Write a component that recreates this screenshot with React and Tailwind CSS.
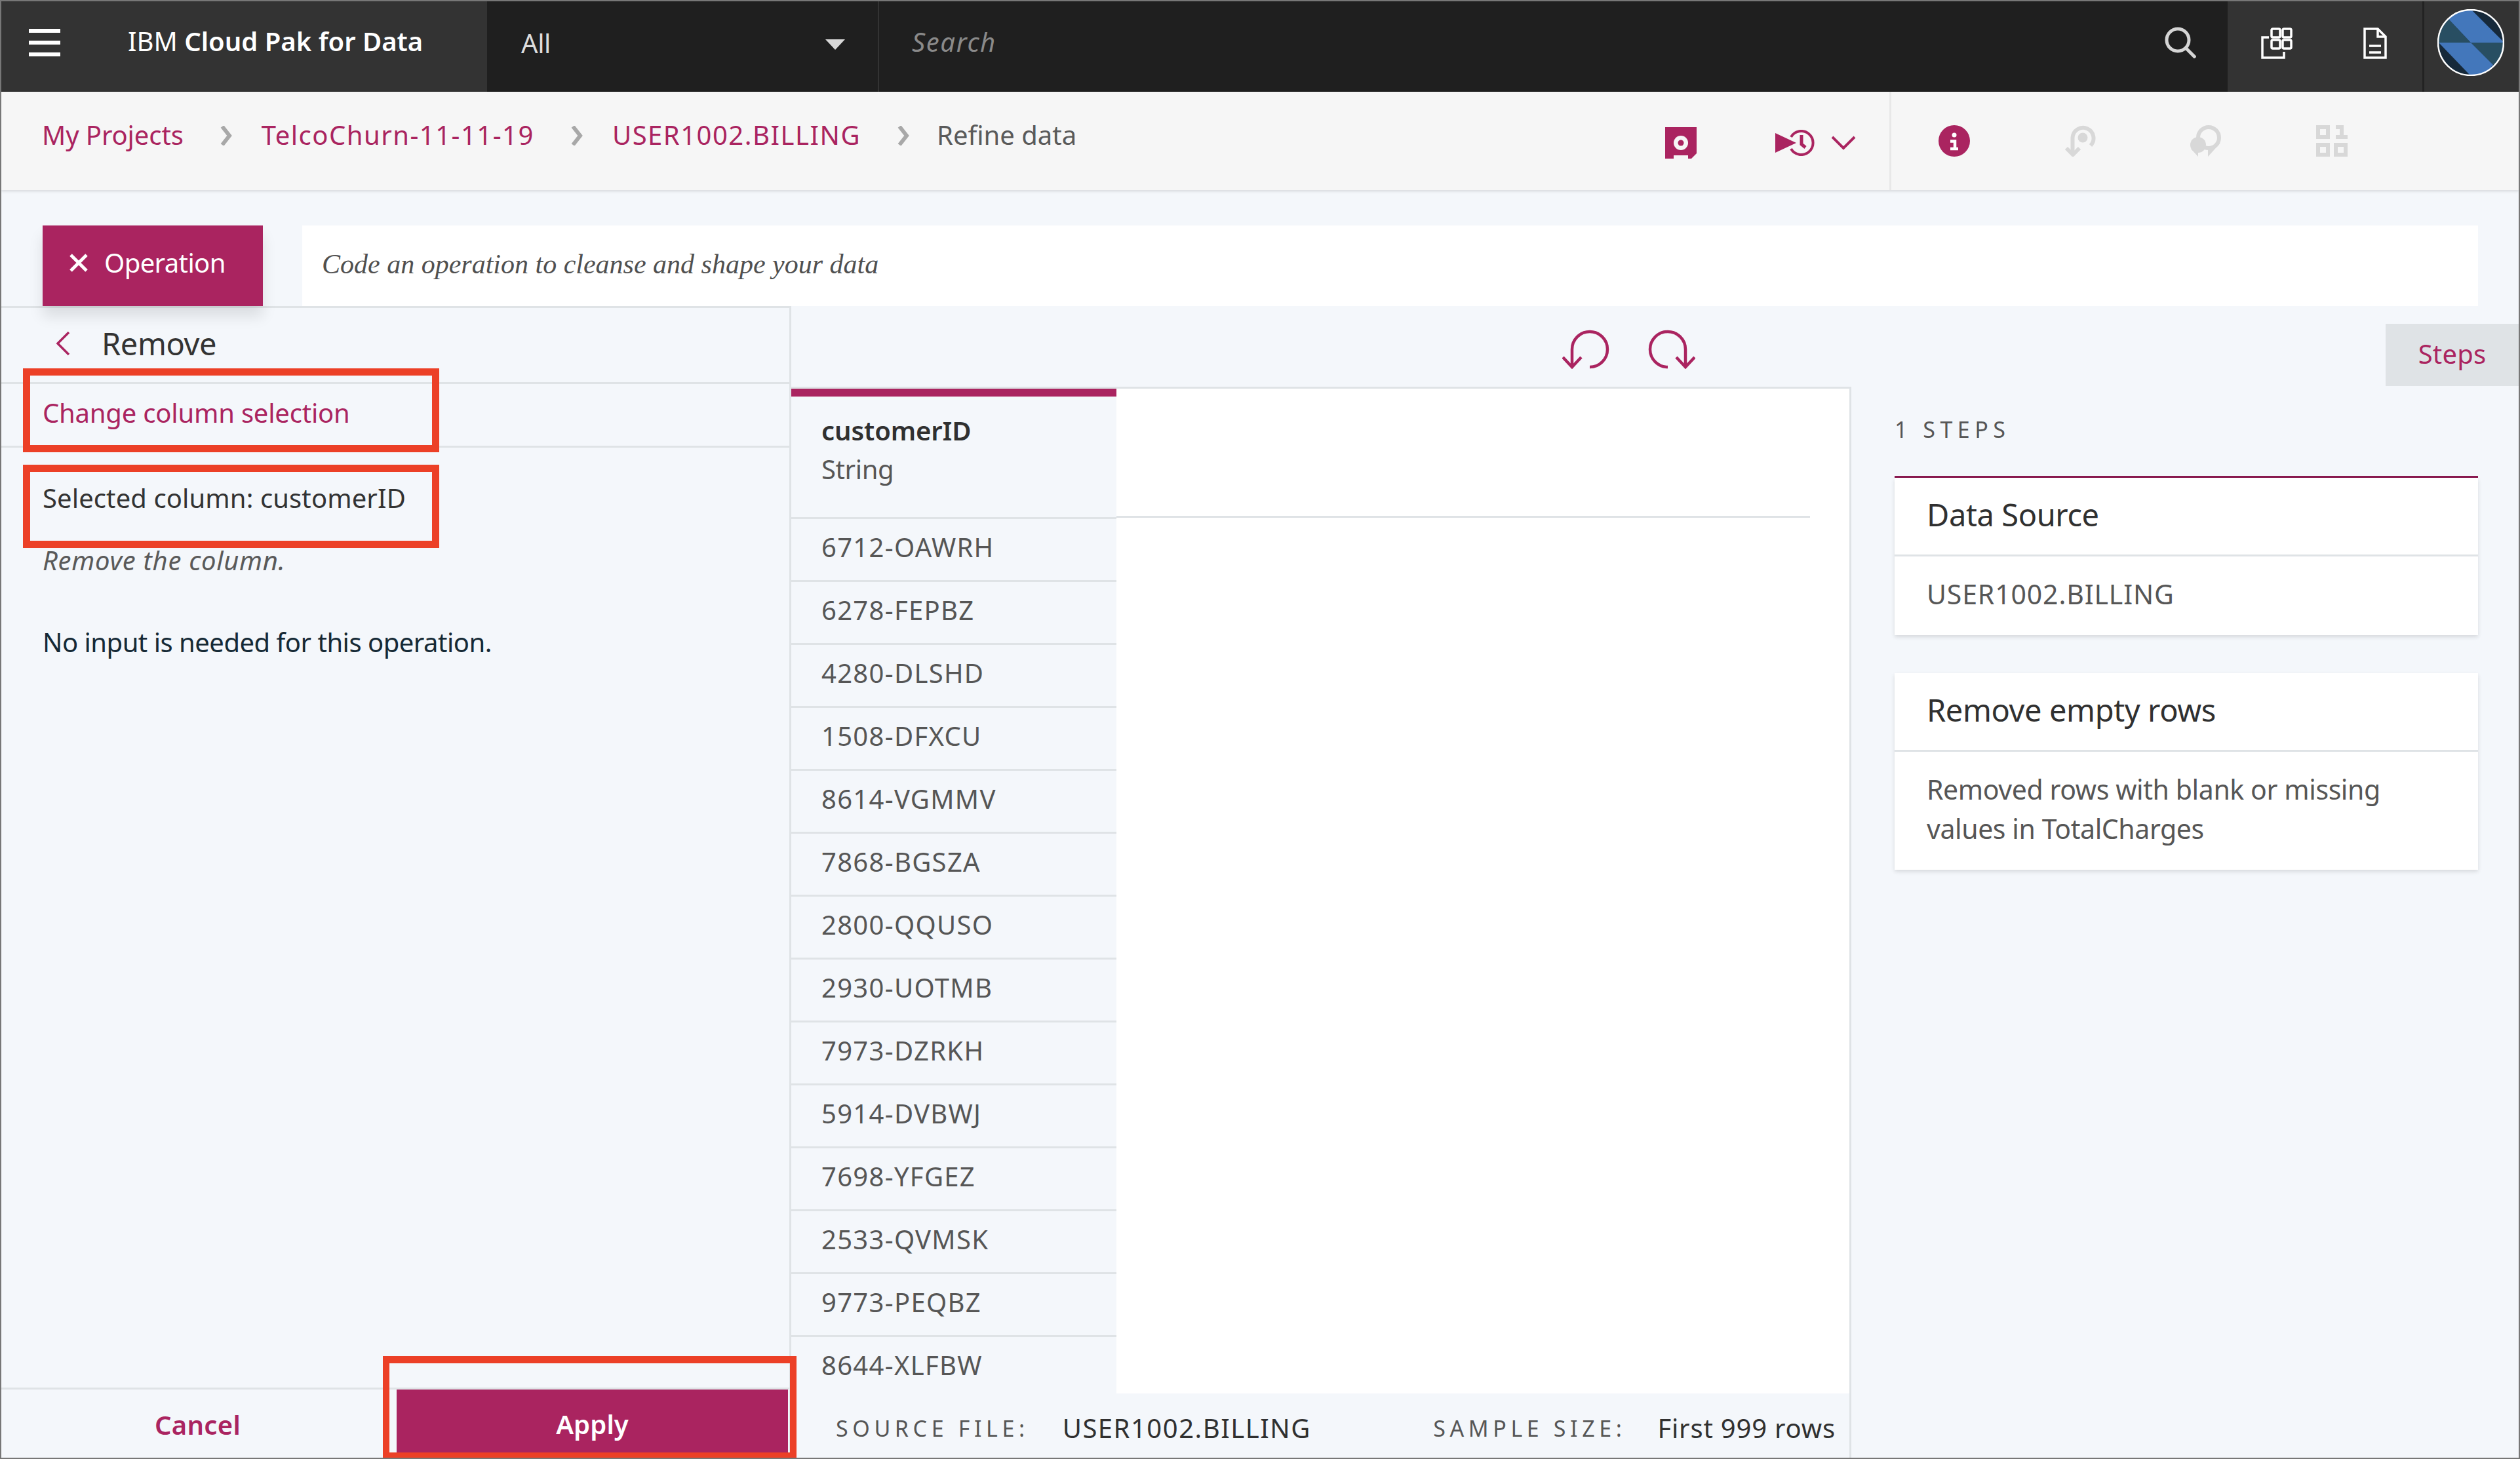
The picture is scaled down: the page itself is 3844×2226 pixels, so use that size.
const rows = ['6712-OAWRH', '6278-FEPBZ', '4280-DLSHD', '1508-DFXCU', '8614-VGMMV', '7868-BGSZA', '2800-QQUSO', '2930-UOTMB', '7973-DZRKH', '5914-DVBWJ', '7698-YFGEZ', '2533-QVMSK', '9773-PEQBZ', '8644-XLFBW']

function Chevron() {
    return (
        <svg width="20" height="30" viewBox="0 0 20 30" className="mt-[11px] ml-[55px] mr-[44px] shrink-0" fill="none" stroke="#a8a8a8" strokeWidth="6">
            <path d="M4 1l11 14L4 29" />
        </svg>
    )
}

function StepCard({ title, bodyClass, lines }) {
    return (
        <div className="bg-white shadow-[0_3px_6px_rgba(0,0,0,0.12)]">
            <div className="h-[117px] flex items-center px-[49px] pb-[4px] text-[47px] text-[#303030]">{title}</div>
            <div className={`border-t-[3px] border-[#dfe3e6] px-[49px] pt-[27px] pb-[33px] text-[41px] leading-[60px] text-[#565656] ${bodyClass}`}>
                {lines.map(l => <div key={l}>{l}</div>)}
            </div>
        </div>
    )
}

export default function App() {
    return (
        <div className="w-[3844px] h-[2226px] relative overflow-hidden flex flex-col bg-[#f4f7fb] border-2 border-[#777777] font-['Noto_Sans',sans-serif] tracking-[-0.4px]">
            {/* Top bar */}
            <header className="h-[138px] flex bg-[#1f1f1f] text-white shrink-0">
                <div className="w-[741px] bg-[#333333] flex items-center pl-[42px]">
                    <svg width="48" height="42" viewBox="0 0 48 42" className="mb-[12px]" fill="#ffffff">
                        <rect width="48" height="6" />
                        <rect y="18" width="48" height="6" />
                        <rect y="36" width="48" height="6" />
                    </svg>
                    <span className="ml-[103px] mb-[16px] text-[40px] tracking-normal">IBM <b className="font-semibold">Cloud Pak for Data</b></span>
                </div>
                <div className="w-[598px] flex items-center justify-between pl-[52px] pr-[50px] border-r-2 border-[#333333]">
                    <span className="text-[40px] text-[#dddddd] mb-[10px]">All</span>
                    <svg width="30" height="16" viewBox="0 0 30 16" className="mb-[6px]" fill="#d8d8d8"><path d="M0 0h30L15 16z" /></svg>
                </div>
                <div className="flex-1 flex items-center justify-between pl-[50px] pr-[48px]">
                    <span className="text-[40px] italic tracking-[1.6px] text-[#8a8a8a] mb-[14px]">Search</span>
                    <svg width="48" height="48" viewBox="0 0 48 48" className="mb-[12px]" fill="none" stroke="#d5d5d5" strokeWidth="5">
                        <circle cx="20" cy="20" r="17" />
                        <path d="M32 32l15 15" />
                    </svg>
                </div>
                <div className="w-[300px] bg-[#333333] flex items-center pl-[51px] gap-[108px] border-r-[3px] border-[#222222]">
                    <svg width="48" height="48" viewBox="0 0 48 48" className="mb-[10px]" fill="none" stroke="#ffffff" strokeWidth="3.5">
                        <rect x="16" y="2" width="13" height="13" rx="2" />
                        <rect x="33" y="2" width="13" height="13" rx="2" />
                        <rect x="16" y="19" width="13" height="13" rx="2" />
                        <rect x="33" y="19" width="13" height="13" rx="2" />
                        <path d="M12 15H2v31h33V37" />
                    </svg>
                    <svg width="36" height="48" viewBox="0 0 36 48" className="mb-[10px]" fill="none" stroke="#ffffff" strokeWidth="3.5">
                        <path d="M2 2h20l12 12v32H2z" />
                        <path d="M22 2v12h12M9 28h18M9 38h18" />
                    </svg>
                </div>
                <div className="w-[144px] shrink-0 bg-[#333333] flex items-center pl-[20px]">
                    <svg width="102" height="102" viewBox="0 0 102 102" className="mb-[12px]">
                        <clipPath id="avatarClip"><circle cx="51" cy="51" r="50" /></clipPath>
                        <g clipPath="url(#avatarClip)">
                            <rect width="102" height="102" fill="#16293a" />
                            <path d="M0 51H51L17 15 0 30z" fill="#284e62" />
                            <path d="M51 51h51v19L85 85z" fill="#284e62" />
                            <path d="M17 15 30 0H51l51 51H51z" fill="#4377bb" />
                            <path d="M2 51H51L85 85 70 102H51z" fill="#4377bb" />
                        </g>
                        <circle cx="51" cy="51" r="50" fill="none" stroke="#ffffff" strokeWidth="2.5" />
                    </svg>
                </div>
            </header>

            {/* Breadcrumb bar */}
            <div className="h-[150px] shrink-0 flex bg-[#f6f6f6] shadow-[0_2px_4px_rgba(0,0,0,0.12)] z-10">
                <div className="flex items-start pt-[41px] pl-[62px] text-[40px] leading-[50px] text-[#aa2460]">
                    <span className="tracking-[-0.1px]">My Projects</span>
                    <Chevron />
                    <span className="tracking-[1.5px]">TelcoChurn-11-11-19</span>
                    <Chevron />
                    <span className="tracking-[1.5px]">USER1002.BILLING</span>
                    <Chevron />
                    <span className="-ml-[3px] text-[#5a5a5a] tracking-[0px]">Refine data</span>
                </div>
                <div className="ml-auto flex h-full">
                    <div className="flex items-center gap-[120px] pr-[51px] border-r-[3px] border-[#e8e8e8]">
                        <svg width="48" height="48" viewBox="0 0 48 48" className="mt-[6px]">
                            <path fill="#aa2460" d="M0 0H48V40L40 48H35V43H13V48H0z" />
                            <circle cx="24" cy="24" r="11" fill="#f6f6f6" />
                            <circle cx="24" cy="24" r="4.5" fill="#aa2460" />
                        </svg>
                        <div className="flex items-center gap-[25px] mt-[6px]">
                            <svg width="60" height="40" viewBox="0 0 60 40" fill="none">
                                <path d="M0 5 32 20 0 35z" fill="#aa2460" />
                                <path d="M24 11A18 18 0 1 1 24 29" stroke="#aa2460" strokeWidth="4" />
                                <path d="M40 8V22l6 5" stroke="#aa2460" strokeWidth="5" />
                            </svg>
                            <svg width="38" height="22" viewBox="0 0 38 22" fill="none" stroke="#aa2460" strokeWidth="4"><path d="M2 2l17 17L36 2" /></svg>
                        </div>
                    </div>
                    <div className="w-[957px] flex items-center pl-[72px] gap-[144px]">
                        <svg width="48" height="48" viewBox="0 0 48 48">
                            <circle cx="24" cy="24" r="24" fill="#aa2460" />
                            <circle cx="24" cy="15" r="3.5" fill="#ffffff" />
                            <path d="M18 24.500h7V36M18 36h12" stroke="#ffffff" strokeWidth="4.500" fill="none" />
                        </svg>
                        <svg width="48" height="48" viewBox="0 0 48 48" fill="none" stroke="#d8d8d8" strokeWidth="6">
                            <path d="M40 31A16 16 0 1 0 12.500 19V44" />
                            <circle cx="28" cy="19" r="7.500" fill="#d8d8d8" stroke="none" />
                            <path d="M3 35l10 10 10-10" />
                        </svg>
                        <svg width="48" height="48" viewBox="0 0 48 48" fill="#d8d8d8">
                            <circle cx="28" cy="19" r="16" fill="none" stroke="#d8d8d8" strokeWidth="6" />
                            <circle cx="12" cy="30" r="12" />
                            <path d="M1 36 12 48V36zM27 48V37L46 27z" />
                        </svg>
                        <svg width="48" height="48" viewBox="0 0 48 48" fill="#d8d8d8">
                            <path fillRule="evenodd" d="M0 0H21V21H0zM6 6V15H15V6zM0 27H21V48H0zM6 33V42H15V33zM27 27H48V48H27zM33 33V42H42V33z" />
                            <path d="M30 0H42V15H48V21H30V15H36V6H30z" />
                        </svg>
                    </div>
                </div>
            </div>

            {/* Operation row */}
            <div className="flex shrink-0 pt-[54px] pl-[63px] pr-[62px] h-[177px]">
                <button className="w-[336px] h-[123px] bg-[#aa2460] text-white flex items-center text-[40px] tracking-[-0.6px] pl-[40px] pb-[9px] gap-[24px] shadow-[0_16px_20px_rgba(0,0,0,0.1)] z-10">
                    <svg width="30" height="30" viewBox="0 0 30 30" stroke="#ffffff" strokeWidth="5"><path d="M3 3l24 24M27 3L3 27" /></svg>
                    Operation
                </button>
                <div className="flex-1 ml-[60px] h-[123px] bg-white flex items-center pl-[30px] pb-[4px] font-['Liberation_Serif',serif] italic text-[42px] tracking-normal text-[#505050]">
                    Code an operation to cleanse and shape your data
                </div>
            </div>

            <div className="flex-1 flex min-h-0">
                {/* Left panel */}
                <aside className="w-[1205px] shrink-0 flex flex-col border-t-[3px] border-r-[3px] border-[#dfe3e6]">
                    <div className="h-[113px] flex items-center pl-[82px] pb-[5px] text-[47px] text-[#333333]">
                        <svg width="24" height="38" viewBox="0 0 24 38" fill="none" stroke="#aa2460" strokeWidth="3.500" className="mr-[47px]"><path d="M21 2L4 19l17 17" /></svg>
                        Remove
                    </div>
                    <div className="h-[97px] flex items-center pl-[63px] pb-[6px] border-t-[3px] border-[#dfe3e6] text-[40px] tracking-[-0.2px] text-[#aa2460]">Change column selection</div>
                    <div className="border-t-[3px] border-[#dfe3e6] pl-[63px] pt-[52px] flex-1 flex flex-col text-[40px] leading-[50px]">
                        <p className="tracking-[0.1px] text-[#333333]">Selected column: customerID</p>
                        <p className="mt-[45px] tracking-[0.7px] italic text-[#5a5a5a]">Remove the column.</p>
                        <p className="mt-[75px] tracking-[-0.5px] text-[#152935]">No input is needed for this operation.</p>
                    </div>
                    <div className="h-[107px] shrink-0 flex border-t-[3px] border-[#dfe3e6]">
                        <button className="w-[603px] text-[40px] font-semibold tracking-[0.3px] text-[#aa2460] pt-[4px] pr-[4px]">Cancel</button>
                        <button className="flex-1 bg-[#aa2460] text-[40px] font-semibold tracking-[0.1px] text-white mb-[8px] mr-[2px] pt-[9px]">Apply</button>
                    </div>
                </aside>

                {/* Data column and steps */}
                <div className="flex-1 flex flex-col min-w-0 pt-[27px]">
                    <div className="flex h-[96px] shrink-0">
                        <div className="w-[1617px] flex items-start justify-end gap-[59px] pr-[238px] pt-[9px]">
                            <svg width="72" height="60" viewBox="0 0 72 60" fill="none" stroke="#aa2460" strokeWidth="4.500">
                                <path d="M42 57A27 27 0 1 0 15 30V57" />
                                <path d="M1 42L15 57 29 42" />
                            </svg>
                            <svg width="72" height="60" viewBox="0 0 72 60" fill="none" stroke="#aa2460" strokeWidth="4.500">
                                <path d="M30 57A27 27 0 1 1 57 30V57" />
                                <path d="M43 42L57 57 71 42" />
                            </svg>
                        </div>
                        <div className="ml-auto w-[203px] h-[95px] bg-[#dfe3e6] flex items-center justify-center pb-[4px] text-[40px] tracking-[0.2px] text-[#aa2460]">Steps</div>
                    </div>
                    <div className="flex-1 flex min-h-0">
                        <div className="w-[1617px] shrink-0 flex flex-col border-r-[3px] border-[#dfe3e6] border-t-[3px]">
                            <div className="flex-1 flex min-h-0 overflow-hidden bg-white">
                                <div className="w-[496px] shrink-0 bg-[#f4f7fb] overflow-hidden">
                                    <div className="h-[12px] bg-[#aa2460]" />
                                    <div className="h-[184px] pl-[46px] pt-[22px] text-[40px] leading-[59px]">
                                        <div className="font-semibold tracking-[-0.1px] text-[#303030]">customerID</div>
                                        <div className="text-[#565656]">String</div>
                                    </div>
                                    {rows.map(r => (
                                        <div key={r} className="h-[96px] border-t-[3px] border-[#dfe3e6] pl-[46px] pb-[8px] flex items-center text-[40px] tracking-[1.3px] text-[#565656]">{r}</div>
                                    ))}
                                </div>
                                <div className="flex-1">
                                    <div className="mt-[194px] mr-[60px] border-b-[3px] border-[#dfe3e6]" />
                                </div>
                            </div>
                            <div className="h-[98px] shrink-0 flex items-center pl-[68px] pr-[21px] pt-[8px]">
                                <span className="text-[34px] tracking-[6.6px] text-[#565656]">SOURCE FILE:</span>
                                <span className="ml-[51px] text-[40px] tracking-[1.5px] text-[#303030]">USER1002.BILLING</span>
                                <span className="ml-auto text-[34px] tracking-[6.6px] text-[#565656]">SAMPLE SIZE:</span>
                                <span className="ml-[48px] text-[40px] tracking-[0.8px] text-[#303030]">First 999 rows</span>
                            </div>
                        </div>
                        <div className="flex-1 pl-[66px] pr-[62px] pt-[40px]">
                            <div className="text-[34px] leading-[50px] tracking-[7.5px] text-[#565656]">1 STEPS</div>
                            <div className="mt-[46px] border-t-[3px] border-[#8a1a50]">
                                <StepCard title="Data Source" bodyClass="tracking-[0.85px]" lines={['USER1002.BILLING']} />
                            </div>
                            <div className="mt-[58px]">
                                <StepCard title="Remove empty rows" bodyClass="" lines={['Removed rows with blank or missing', 'values in TotalCharges']} />
                            </div>
                        </div>
                    </div>
                </div>
            </div>

            {/* Annotation boxes */}
            <div className="absolute left-[33px] top-[560px] w-[635px] h-[128px] border-[11px] border-[#ec4027]" />
            <div className="absolute left-[33px] top-[707px] w-[635px] h-[127px] border-[11px] border-[#ec4027]" />
            <div className="absolute left-[582px] top-[2067px] w-[631px] h-[155px] border-x-[10px] border-t-[11px] border-b-[8px] border-[#ec4027]" />
        </div>
    )
}
